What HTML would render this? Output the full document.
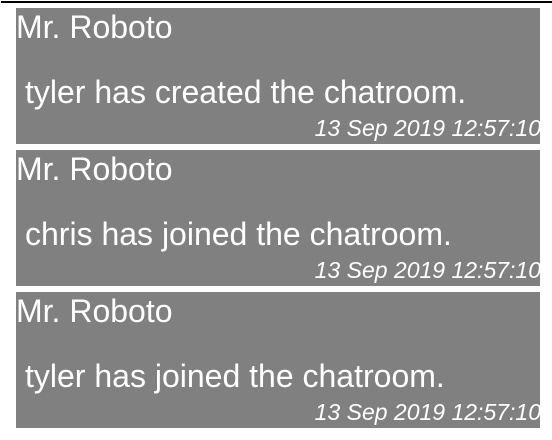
<!DOCTYPE html>
<html><head><meta charset="utf-8"><style>
html,body{margin:0;padding:0;background:#fff;width:552px;height:440px;overflow:hidden;position:relative;font-family:"Liberation Sans",Arial,sans-serif;}
.line{position:absolute;left:1px;top:1px;width:551px;height:2px;background:#000;}
.box{position:absolute;left:16px;width:524px;height:136px;background:#808080;color:#fff;overflow:hidden;}
.box span{position:absolute;white-space:nowrap;line-height:1;}
.n{left:0;top:3px;font-size:32px;}
.m{left:9px;top:68px;font-size:32px;}
.t{right:-1px;top:109px;font-size:23px;font-style:italic;}
</style></head><body>
<div class="line"></div>
<div class="box" style="top:8px"><span class="n">Mr. Roboto</span><span class="m">tyler has created the chatroom.</span><span class="t">13 Sep 2019 12:57:10</span></div>
<div class="box" style="top:150px"><span class="n">Mr. Roboto</span><span class="m">chris has joined the chatroom.</span><span class="t">13 Sep 2019 12:57:10</span></div>
<div class="box" style="top:292px"><span class="n">Mr. Roboto</span><span class="m">tyler has joined the chatroom.</span><span class="t">13 Sep 2019 12:57:10</span></div>
</body></html>
